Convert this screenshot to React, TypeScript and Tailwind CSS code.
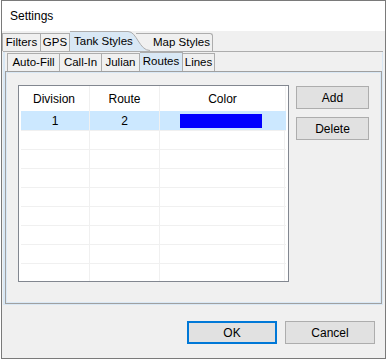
const font = { fontFamily: '"Liberation Sans", Arial, sans-serif' }

const rows = [{ division: '1', route: '2', color: '#0000ff' }]

export default function App() {
  const empty = Array.from({ length: 8 })

  return (
    <div className="w-[388px] h-[360px] bg-white text-[12px] text-black whitespace-nowrap" style={font}>
      <div className="ml-[1px] w-[385px] h-[359px] border border-[#7a7a7a] flex flex-col">
        {/* title bar */}
        <div className="h-[30px] bg-white flex items-center pl-[8px] shrink-0">Settings</div>

        <div className="flex-1 bg-[#f0f0f0] flex flex-col">
          {/* outer tabs */}
          <div className="h-[20px] flex items-end shrink-0 text-[11.5px]">
            <div className="h-[18px] w-[39px] border border-b-0 border-[#adadad] flex items-center justify-center">
              Filters
            </div>
            <div className="h-[18px] w-[29px] border border-l-0 border-b-0 border-[#adadad] flex items-center justify-center">
              GPS
            </div>
            <div className="h-[20px] w-[58px] bg-[#d9e8f5] border-t border-[#adadad] flex items-center pl-[4px] relative z-20">
              Tank Styles
            </div>
            <svg width="22" height="20" viewBox="0 0 22 20" className="relative z-10 shrink-0">
              <path d="M0 0.5 C9 0.5 11 19.5 22 19.5 L0 20 Z" fill="#d9e8f5" />
              <path d="M0 0.5 C9 0.5 11 19.5 22 19.5" fill="none" stroke="#adadad" />
            </svg>
            <div className="h-[18px] w-[77px] -ml-[14px] border-t border-r border-[#adadad] rounded-tr-[3px] flex items-center pl-[17px]">
              Map Styles
            </div>
          </div>

          {/* outer panel */}
          <div className="ml-[1px] w-[380px] h-[254px] bg-[#d9e8f5] border-t border-[#adadad] pl-[2px] pr-[1px] pb-[1px] flex flex-col shrink-0">
            <div className="flex-1 bg-[#f0f0f0] flex flex-col">
              {/* inner tabs */}
              <div className="h-[19px] flex items-end pl-[2px] shrink-0 text-[11.5px]">
                <div className="h-[18px] w-[53px] border border-b-0 border-[#adadad] flex items-center justify-center">
                  Auto-Fill
                </div>
                <div className="h-[18px] w-[42px] border-t border-r border-[#adadad] flex items-center justify-center">
                  Call-In
                </div>
                <div className="h-[18px] w-[38px] border-t border-r border-[#adadad] flex items-center justify-center">
                  Julian
                </div>
                <div className="h-[19px] w-[43px] bg-[#d9e8f5] border-t border-r border-[#adadad] flex items-center justify-center">
                  Routes
                </div>
                <div className="h-[18px] w-[32px] border-t border-r border-[#adadad] flex items-center justify-center">
                  Lines
                </div>
              </div>

              {/* inner panel */}
              <div className="flex-1 border border-[#a0a0a0] shadow-[inset_0_0_0_1px_#d9e8f5] pl-[12px] pt-[13px] flex gap-[7px]">
                {/* list view */}
                <div className="w-[271px] h-[197px] border border-[#828790] bg-white overflow-hidden">
                  <div className="h-[25px] flex">
                    <div className="w-[71px] border-r border-[#f0f0f0] flex items-center justify-center">Division</div>
                    <div className="w-[70px] border-r border-[#f0f0f0] flex items-center justify-center">Route</div>
                    <div className="w-[126px] border-r border-[#f0f0f0] flex items-center justify-center">Color</div>
                  </div>
                  {rows.map((r) => (
                    <div key={r.division} className="h-[19px] flex bg-[#cce8ff] ml-[2px] mr-[2px]">
                      <div className="w-[69px] border-r border-[#f0f0f0] flex items-center justify-center">
                        {r.division}
                      </div>
                      <div className="w-[70px] border-r border-[#f0f0f0] flex items-center justify-center">
                        {r.route}
                      </div>
                      <div className="w-[125px] flex items-center pl-[20px]">
                        <div className="w-[82px] h-[14px]" style={{ backgroundColor: r.color }} />
                      </div>
                    </div>
                  ))}
                  {empty.map((_, i) => (
                    <div key={i} className="h-[19px] flex border-t border-[#f0f0f0] ml-[2px] mr-[2px]">
                      <div className="w-[69px] border-r border-[#f0f0f0]" />
                      <div className="w-[70px] border-r border-[#f0f0f0]" />
                      <div className="w-[125px] border-r border-[#f0f0f0]" />
                    </div>
                  ))}
                </div>

                {/* side buttons */}
                <div className="flex flex-col gap-[8px] pt-[1px]">
                  <button className="w-[73px] h-[23px] border border-[#adadad] bg-[#e1e1e1]">Add</button>
                  <button className="w-[73px] h-[23px] border border-[#adadad] bg-[#e1e1e1]">Delete</button>
                </div>
              </div>
            </div>
          </div>

          {/* dialog buttons */}
          <div className="mt-[16px] flex justify-end gap-[8px] pr-[10px]">
            <button className="w-[90px] h-[23px] border-2 border-[#0078d7] bg-[#e1e1e1]">OK</button>
            <button className="w-[90px] h-[23px] border border-[#adadad] bg-[#e1e1e1]">Cancel</button>
          </div>
        </div>
      </div>
    </div>
  )
}
